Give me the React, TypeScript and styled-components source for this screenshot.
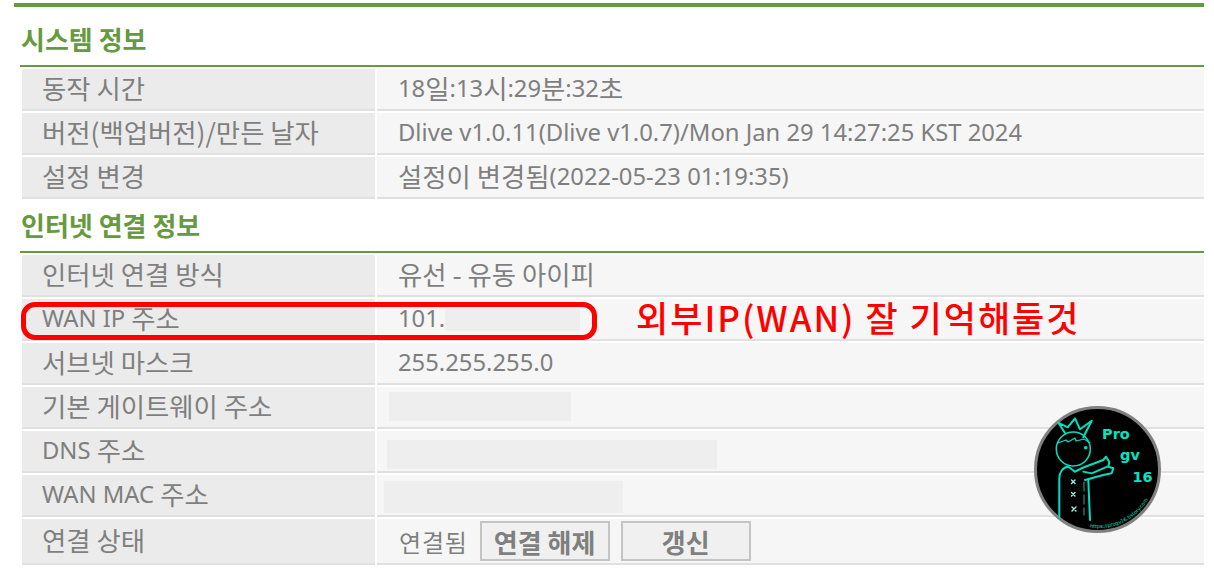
import React from 'react';
import styled, { createGlobalStyle } from 'styled-components';

const GlobalStyle = createGlobalStyle`
  html, body {
    margin: 0;
    padding: 0;
    background: #fff;
  }
  body {
    font-family: "Noto Sans", "Noto Sans CJK KR", sans-serif;
  }
`;

const Page = styled.div`
  position: relative;
  width: 1214px;
  height: 586px;
  overflow: hidden;
  padding: 3px 10px 0 14px;
  box-sizing: border-box;
`;

const TopBar = styled.div`
  height: 4px;
  background: #669a3e;
`;

const SectionTitle = styled.h2<{ $top: number }>`
  margin: ${(p) => p.$top}px 0 10px 7px;
  font-size: 26px;
  line-height: 32px;
  font-weight: 700;
  color: #669a3e;
  font-family: "Noto Sans CJK KR", sans-serif;
`;

const Table = styled.div`
  margin-left: 6px;
  border-top: 2px solid #669a3e;
  display: flex;
  flex-direction: column;
`;

const Row = styled.div<{ $tall?: boolean }>`
  display: grid;
  grid-template-columns: 353px 1fr;
  grid-template-rows: minmax(0, 1fr);
  column-gap: 2px;
  padding: 2px 0 0 2px;
  height: ${(p) => (p.$tall ? 48 : 44)}px;
  box-sizing: border-box;
`;

const Label = styled.div`
  background: #ebebeb;
  border-bottom: 2px solid #e0e0e0;
  padding: 0 0 3px 20px;
  display: flex;
  align-items: center;
  font-size: 23.8px;
  color: #7f7f7f;
  white-space: pre;
`;

const Value = styled.div<{ $flush?: boolean }>`
  background: #f6f6f6;
  border-bottom: 2px solid #e0e0e0;
  padding: 0 0 ${(p) => (p.$flush ? 0 : 3)}px 21px;
  display: flex;
  align-items: center;
  font-size: 23.8px;
  color: #7f7f7f;
  white-space: pre;
`;

const Ko = styled.span`
  font-family: "Noto Sans CJK KR", sans-serif;
  font-size: 26.4px;
  line-height: 30px;
`;

const Masked = styled.span<{ $w: number; $h: number; $x: number; $y: number }>`
  display: block;
  width: ${(p) => p.$w}px;
  height: ${(p) => p.$h}px;
  margin: ${(p) => p.$y}px 0 0 ${(p) => p.$x}px;
  background: #eeeeee;
`;

const StatusText = styled.span`
  margin: 0 12px 0 1px;
  font-family: "Noto Sans CJK KR", sans-serif;
  font-size: 24px;
  letter-spacing: 0.8px;
`;

const ActionButton = styled.button`
  width: 130px;
  height: 40px;
  margin-right: 11px;
  padding: 0;
  box-sizing: border-box;
  border: 2px solid #c4c4c4;
  background: #f0f0f0;
  color: #7f7f7f;
  font-family: "Noto Sans CJK KR", sans-serif;
  font-size: 26px;
  font-weight: 700;
`;

const RedBox = styled.div`
  position: absolute;
  left: 21px;
  top: 302px;
  width: 576px;
  height: 38px;
  box-sizing: border-box;
  border: 5px solid #ff0000;
  border-radius: 14px;
`;

const Annotation = styled.div`
  position: absolute;
  left: 636px;
  top: 292px;
  font-family: "Noto Sans CJK KR", sans-serif;
  font-size: 35px;
  font-weight: 500;
  line-height: 50px;
  letter-spacing: 2px;
  color: #ff0000;
  white-space: nowrap;
`;

const Badge = styled.svg`
  position: absolute;
  left: 1034px;
  top: 406px;
`;

const BadgeLabel = styled.text`
  fill: #00e6c3;
  font-family: "DejaVu Sans", sans-serif;
  font-weight: 700;
  font-size: 14.5px;
`;

const BadgeUrl = styled.text`
  fill: #00e0c0;
  font-family: "DejaVu Sans", sans-serif;
  font-size: 5px;
`;

const Watermark = () => (
  <Badge width="127" height="127" viewBox="0 0 127 127">
    <circle cx="63.5" cy="63.5" r="62" fill="#000" stroke="#808080" strokeWidth="3" />
    <g fill="none" stroke="#00e0c0" strokeWidth="1.5" strokeLinecap="round" strokeLinejoin="round">
      <circle cx="39.3" cy="43" r="17" />
      <path d="M31 27 L24.3 16.7 L33.7 21.3 L41 12.3 L46 23.3 L57.7 14.7 L49.3 31.3" strokeWidth="2" />
      <path d="M23.3 37.3 L32 34 L34 36 L41 32 L42 35 L50 33 L56 36.7" strokeWidth="1.2" />
      <path d="M25.3 110.7 L25.3 72.3 C25.3 66 29 61 34.3 60.7 L41 65.7 L49.3 61.5 L69.3 54 L72 50.7 L75.3 55.7 L74.3 60.7 L79.3 62.3 L77.7 67.3 L69.3 69 L51 74" strokeWidth="2" />
      <path d="M49.3 65.7 L57.7 67.3 L73.3 60.7" strokeWidth="1.8" />
      <path d="M54.3 74 L56 114" strokeWidth="2" />
      <path d="M50 76 L50 109" stroke="#009c86" strokeDasharray="9 4" strokeWidth="1.2" />
      <path d="M37.5 74 L41 77.5 M41 74 L37.5 77.5 M37.5 86.5 L41 90 M41 86.5 L37.5 90 M38 101 L42 105 M42 101 L38 105" stroke="#a0f0e2" strokeWidth="1.4" />
    </g>
    <circle cx="51.7" cy="41.7" r="1.8" fill="#00e0c0" />
    <BadgeLabel x="68" y="33">Pro</BadgeLabel>
    <BadgeLabel x="86" y="54">gv</BadgeLabel>
    <BadgeLabel x="98.5" y="76">16</BadgeLabel>
    <path id="badge-url" d="M 56 121.5 A 58.5 58.5 0 0 0 120 80" fill="none" />
    <BadgeUrl>
      <textPath href="#badge-url">https://progv16.tistory.com</textPath>
    </BadgeUrl>
  </Badge>
);

const App = () => (
  <Page>
    <GlobalStyle />
    <TopBar />
    <SectionTitle $top={16}>시스템 정보</SectionTitle>
    <Table>
      <Row>
        <Label><Ko>동작 시간</Ko></Label>
        <Value>18<Ko>일</Ko>:13<Ko>시</Ko>:29<Ko>분</Ko>:32<Ko>초</Ko></Value>
      </Row>
      <Row>
        <Label><Ko>버전(백업버전)/만든 날자</Ko></Label>
        <Value>Dlive v1.0.11(Dlive v1.0.7)/Mon Jan 29 14:27:25 KST 2024</Value>
      </Row>
      <Row>
        <Label><Ko>설정 변경</Ko></Label>
        <Value><Ko>설정이 변경됨</Ko>(2022-05-23 01:19:35)</Value>
      </Row>
    </Table>
    <SectionTitle $top={10}>인터넷 연결 정보</SectionTitle>
    <Table>
      <Row>
        <Label><Ko>인터넷 연결 방식</Ko></Label>
        <Value><Ko>유선 - 유동 아이피</Ko></Value>
      </Row>
      <Row>
        <Label>WAN IP <Ko>주소</Ko></Label>
        <Value>101.<Masked $w={135} $h={22} $x={0} $y={5} /></Value>
      </Row>
      <Row>
        <Label><Ko>서브넷 마스크</Ko></Label>
        <Value>255.255.255.0</Value>
      </Row>
      <Row>
        <Label><Ko>기본 게이트웨이 주소</Ko></Label>
        <Value><Masked $w={182} $h={29} $x={-9} $y={2} /></Value>
      </Row>
      <Row>
        <Label>DNS <Ko>주소</Ko></Label>
        <Value><Masked $w={330} $h={29} $x={-11} $y={9} /></Value>
      </Row>
      <Row>
        <Label>WAN MAC <Ko>주소</Ko></Label>
        <Value><Masked $w={239} $h={32} $x={-14} $y={7} /></Value>
      </Row>
      <Row $tall>
        <Label><Ko>연결 상태</Ko></Label>
        <Value $flush>
          <StatusText>연결됨</StatusText>
          <ActionButton>연결 해제</ActionButton>
          <ActionButton>갱신</ActionButton>
        </Value>
      </Row>
    </Table>
    <RedBox />
    <Annotation>외부IP(WAN) 잘 기억해둘것</Annotation>
    <Watermark />
  </Page>
);

export default App;
